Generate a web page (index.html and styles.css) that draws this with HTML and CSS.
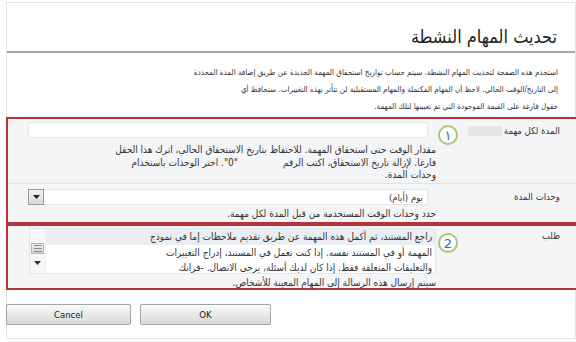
FILE: index.html
```html
<!DOCTYPE html>
<html lang="ar" dir="rtl">
<head>
  <meta charset="UTF-8" />
  <title>تحديث المهام النشطة</title>
  <link rel="stylesheet" href="styles.css">
</head>
<body>
  <div class="page">
    <div class="title-bar">
      <h1>تحديث المهام النشطة</h1>
    </div>

    <p class="intro">
      استخدم هذه الصفحة لتحديث المهام النشطة. سيتم حساب تواريخ استحقاق المهمة الجديدة عن طريق إضافة المدة المحددة<br>
      إلى التاريخ/الوقت الحالي. لاحظ أن المهام المكتملة والمهام المستقبلية لن تتأثر بهذه التغييرات. ستحافظ أي<br>
      حقول فارغة على القيمة الموجودة التي تم تعيينها لتلك المهمة.
    </p>

    <!-- Duration -->
    <div class="box">
      <div class="row row-first">
        <div class="label">المدة لكل مهمة<span class="blur"></span></div>
        <div class="marker"><span class="step">١</span></div>
        <div class="field">
          <div class="input"></div>
          <div class="desc">
            مقدار الوقت حتى استحقاق المهمة. للاحتفاظ بتاريخ الاستحقاق الحالي، اترك هذا الحقل<br>
            فارغا. لإزالة تاريخ الاستحقاق، اكتب الرقم<span class="gap"></span>"0". اختر الوحدات باستخدام<br>
            وحدات المدة.
          </div>
        </div>
      </div>
      <div class="row row-units">
        <div class="label">وحدات المدة</div>
        <div class="marker"></div>
        <div class="field">
          <div class="select">
            <span>يوم (أيام)</span>
            <span class="drop">
              <svg width="7" height="4" viewBox="0 0 7 4"><path d="M0 0h7L3.5 4z" fill="#222"/></svg>
            </span>
          </div>
          <div class="desc">حدد وحدات الوقت المستخدمة من قبل المدة لكل مهمة.</div>
        </div>
      </div>
    </div>

    <!-- Request -->
    <div class="box">
      <div class="row row-request">
        <div class="label">طلب</div>
        <div class="marker"><span class="step">2</span></div>
        <div class="field">
          <div class="textarea">
            <div class="textarea-text">
              <div class="first-line">راجع المستند، ثم أكمل هذه المهمة عن طريق تقديم ملاحظات إما في نموذج</div>
              <div>المهمة أو في المستند نفسه. إذا كنت تعمل في المستند، إدراج التغييرات</div>
              <div>والتعليقات المتعلقة فقط. إذا كان لديك أسئلة، يرجى الاتصال. -فرانك</div>
            </div>
            <div class="scrollbar">
              <span class="scroll-up"></span>
              <span class="grip">
                <svg width="8" height="7" viewBox="0 0 8 7"><path d="M0 .5h8M0 3.5h8M0 6.5h8" stroke="#888" stroke-width="1"/></svg>
              </span>
              <span class="scroll-down">
                <svg width="7" height="4" viewBox="0 0 7 4"><path d="M0 0h7L3.5 4z" fill="#333"/></svg>
              </span>
            </div>
          </div>
          <div class="desc desc-request">سيتم إرسال هذه الرسالة إلى المهام المعينة للأشخاص.</div>
        </div>
      </div>
    </div>

    <div class="actions">
      <button class="btn btn-ok">OK</button>
      <button class="btn">Cancel</button>
    </div>
  </div>
</body>
</html>
```

FILE: styles.css
```css
body {
  margin: 0;
  font-family: "DejaVu Sans Condensed", "DejaVu Sans", Tahoma, sans-serif;
  background-color: #ffffff;
  color: #333;
}

.page {
  box-sizing: border-box;
  width: 570px;
  height: 337px;
  margin: 2px 0 0 2px;
  border: 1px solid #e3e3e3;
}

.title-bar {
  box-sizing: border-box;
  height: 50px;
  border-bottom: 2px solid #a2a9ae;
}

.title-bar h1 {
  margin: 0;
  padding: 22px 18px 0;
  font-size: 18px;
  font-weight: normal;
  line-height: 24px;
  color: #222;
}

.intro {
  margin: 0;
  padding: 11px 17px 0;
  height: 53px;
  font-size: 8px;
  line-height: 17px;
  color: #333;
}

.box {
  margin: 0 -3px 0 -1px;
  border: 2px solid #b5333b;
  background-color: #f4f5f6;
}

.row {
  display: grid;
  grid-template-columns: 118px 22px 1fr;
}

.row-first {
  padding-top: 3px;
  height: 61px;
  border-bottom: 1px solid #e1e3e5;
}

.row-units {
  padding-top: 5px;
  height: 33px;
}

.row-request {
  padding-top: 2px;
  height: 60px;
}

.label {
  position: relative;
  padding-right: 16px;
  padding-top: 2px;
  font-size: 9.5px;
  line-height: 14px;
  color: #333;
}

.row-units .label,
.row-request .label {
  padding-top: 1px;
}

.blur {
  position: absolute;
  top: 4px;
  left: 10px;
  width: 34px;
  height: 10px;
  background-color: #e4e5e6;
}

.marker {
  padding-top: 3px;
}

.row-request .marker {
  padding-top: 5px;
}

.step {
  display: flex;
  align-items: center;
  justify-content: center;
  box-sizing: border-box;
  width: 20px;
  height: 20px;
  border: 2px solid #a9c771;
  border-radius: 50%;
  background-color: #fff;
  color: #3b6aa4;
  font-family: "DejaVu Sans", sans-serif;
  font-size: 13px;
  line-height: 1;
}

.field {
  padding-left: 20px;
}

.input {
  width: 400px;
  height: 16px;
  margin-right: 8px;
  box-sizing: border-box;
  border: 1px solid #e6e8ea;
  background-color: #fff;
}

.desc {
  margin-top: 6px;
  font-size: 10px;
  line-height: 12.5px;
  color: #333;
}

.gap {
  display: inline-block;
  width: 45px;
}

.select {
  display: flex;
  justify-content: space-between;
  align-items: center;
  width: 400px;
  height: 16px;
  margin-right: 8px;
  padding-right: 4px;
  box-sizing: border-box;
  border: 1px solid #e3e5e7;
  background-color: #fff;
  font-size: 9.5px;
}

.drop {
  display: flex;
  align-items: center;
  justify-content: center;
  width: 16px;
  height: 16px;
  margin-left: -1px;
  box-sizing: border-box;
  border: 1px solid #9a9a9a;
  background: linear-gradient(#f2f2f2, #d9d9d9);
}

.row-units .desc {
  margin-top: 3px;
}

.textarea {
  display: flex;
  width: 407px;
  height: 46px;
  box-sizing: border-box;
  border: 1px solid #e3e6e9;
  background-color: #fff;
}

.textarea-text {
  flex: 1;
  font-size: 10px;
  line-height: 15.5px;
}

.textarea-text > div {
  padding-right: 3px;
}

.first-line {
  background-color: #eaeef2;
}

.scrollbar {
  display: flex;
  flex-direction: column;
  align-items: center;
  width: 15px;
  background-color: #f6f7f8;
  border-right: 1px solid #eceef0;
}

.scroll-up {
  height: 14px;
}

.grip {
  display: flex;
  align-items: center;
  justify-content: center;
  width: 13px;
  height: 11px;
  box-sizing: border-box;
  border: 1px solid #b5b5b5;
  background: linear-gradient(#f0f0f0, #d6d6d6);
}

.scroll-down {
  display: flex;
  align-items: center;
  justify-content: center;
  height: 18px;
}

.desc-request {
  margin-top: 2px;
  line-height: 13px;
}

.actions {
  display: flex;
  justify-content: flex-end;
  gap: 9px;
  margin-left: -1px;
  padding-top: 14px;
}

.btn {
  width: 125px;
  height: 21px;
  box-sizing: border-box;
  border: 1px solid #a3a3a3;
  border-radius: 2px;
  background: linear-gradient(#fafafa, #e9e9e9 50%, #d9d9d9);
  font-family: "DejaVu Sans", Tahoma, sans-serif;
  font-size: 8.5px;
  color: #222;
  cursor: pointer;
}

.btn-ok {
  width: 131px;
}
```
